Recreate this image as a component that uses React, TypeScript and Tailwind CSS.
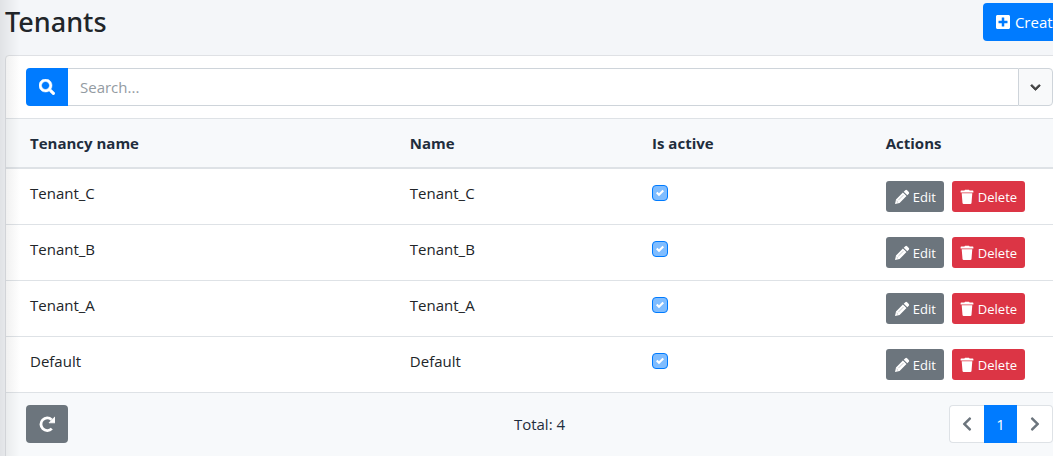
import React from "react";
import {
  FaChevronDown,
  FaChevronLeft,
  FaChevronRight,
  FaPlusSquare,
  FaSearch,
} from "react-icons/fa";

type Tenant = { name: string; active: boolean };

const tenants: Tenant[] = [
  { name: "Tenant_C", active: true },
  { name: "Tenant_B", active: true },
  { name: "Tenant_A", active: true },
  { name: "Default", active: true },
];

function RedoIcon() {
  return (
    <svg viewBox="0 0 16 16" className="size-4" aria-hidden="true">
      <path d="M12.8 12.6A6.3 6.3 0 1 1 12.6 3.7" fill="none" stroke="#fff" strokeWidth="2.8" />
      <path d="M16 0.8V6.8H10z" fill="#fff" stroke="#fff" strokeWidth="0.8" strokeLinejoin="round" />
    </svg>
  );
}

function PencilIcon() {
  return (
    <svg viewBox="0 0 16 16" className="size-4" aria-hidden="true">
      <path
        fill="#fff"
        d="M1 15L2 10.4L8.9 3.5L12.5 7.1L5.6 14zM9.7 2.7L11.3 1.2Q12.2 0.4 13.1 1.2L14.8 2.9Q15.6 3.8 14.8 4.7L13.3 6.3z"
      />
      <path fill="none" stroke="#6c757d" strokeOpacity="0.6" strokeWidth="0.7" d="M4.3 11.2L9.4 6.1M2.6 12L4 13.4" />
    </svg>
  );
}

function TrashIcon() {
  return (
    <svg viewBox="0 0 14 16" className="h-4 w-3.5" aria-hidden="true">
      <path
        fill="#fff"
        d="M0.6 2.2Q0.6 1.6 1.2 1.6H4.4L5 0.8H9L9.6 1.6H12.8Q13.4 1.6 13.4 2.2V3.5H0.6zM1.7 4.2H12.3L11.5 13.9Q11.4 15 10.3 15H3.7Q2.6 15 2.5 13.9z"
      />
    </svg>
  );
}

function ActiveBox({ tenant }: { tenant: Tenant }) {
  return (
    <label className="relative block size-4">
      <input
        type="checkbox"
        checked={tenant.active}
        disabled
        readOnly
        aria-label={`${tenant.name} is active`}
        className="block size-4 appearance-none rounded border border-[#007bff] bg-[#80bdff]"
      />
      <svg viewBox="0 0 8 8" className="pointer-events-none absolute top-1 left-1 size-2" aria-hidden="true">
        <path fill="#fff" d="M6.564.75l-3.59 3.612-1.538-1.55L0 4.26 2.974 7.25 8 2.193z" />
      </svg>
    </label>
  );
}

function TenantRow({ tenant }: { tenant: Tenant }) {
  return (
    <tr className="h-14 border-b border-[#dee2e6] align-top">
      <td className="px-6 py-3">{tenant.name}</td>
      <td className="px-6 py-3">{tenant.name}</td>
      <td className="px-6 py-4">
        <ActiveBox tenant={tenant} />
      </td>
      <td className="px-6 py-3">
        <div className="flex gap-2 text-[13px]">
          <button type="button" className="flex h-[31px] items-center gap-[3px] rounded-[3px] bg-[#6c757d] px-2 text-white">
            <PencilIcon />
            Edit
          </button>
          <button type="button" className="flex h-[31px] items-center gap-1 rounded-[3px] bg-[#dc3545] px-2 text-white">
            <TrashIcon />
            Delete
          </button>
        </div>
      </td>
    </tr>
  );
}

export default function App() {
  return (
    <main className="relative min-h-screen overflow-hidden bg-[#f4f6f9] pl-[5px] font-['Open_Sans','Noto_Sans',sans-serif] text-[15px] leading-6 text-[#212529]">
      <div className="-mr-[21px]">
        <header className="flex h-[55px] items-start justify-between">
          <h1 className="pt-1 font-['Noto_Sans','Open_Sans',sans-serif] text-[27px] leading-9 font-medium">Tenants</h1>
          <button
            type="button"
            className="mt-[3px] mr-px flex h-[38px] items-center gap-1 rounded bg-[#007bff] px-3 whitespace-nowrap text-white"
          >
            <FaPlusSquare className="size-4" />
            Create
          </button>
        </header>

        <section className="rounded border border-[#dfe1e5] bg-white">
          <form className="flex border-b border-[#dee2e6] px-5 py-3" onSubmit={(e) => e.preventDefault()}>
            <button
              type="submit"
              aria-label="Search"
              className="flex h-[38px] w-[42px] items-center justify-center rounded-l bg-[#007bff] text-white"
            >
              <FaSearch className="size-4 stroke-current stroke-[16]" />
            </button>
            <input
              type="text"
              aria-label="Search tenants"
              placeholder="Search..."
              className="h-[38px] min-w-0 flex-1 border-y border-[#ced4da] bg-white px-3 placeholder:text-[#939ba2]"
            />
            <button
              type="button"
              aria-label="Advanced filters"
              className="flex h-[38px] w-[35px] items-center justify-center rounded-r border border-[#ced4da] bg-[#f8f9fa] text-[#444]"
            >
              <FaChevronDown className="size-[11px] stroke-current stroke-[40]" />
            </button>
          </form>

          <table className="w-full table-fixed border-collapse text-left">
            <colgroup>
              <col className="w-[35.6%]" />
              <col className="w-[22.7%]" />
              <col className="w-[21.9%]" />
              <col />
            </colgroup>
            <thead>
              <tr className="h-[49px] border-b-2 border-[#dee2e6] bg-[#f7f9fb] text-[#1f2d3d]">
                <th className="px-6 font-bold">Tenancy name</th>
                <th className="px-6 font-bold">Name</th>
                <th className="px-6 font-bold">Is active</th>
                <th className="px-6 font-bold">Actions</th>
              </tr>
            </thead>
            <tbody>
              {tenants.map((tenant) => (
                <TenantRow key={tenant.name} tenant={tenant} />
              ))}
            </tbody>
          </table>

          <footer className="grid grid-cols-3 items-center bg-[#f7f9fb] px-5 pt-3 pb-4 text-[#1f2d3d]">
            <button
              type="button"
              aria-label="Refresh"
              className="flex h-[38px] w-[42px] items-center justify-center rounded bg-[#6c757d] text-white"
            >
              <RedoIcon />
            </button>
            <p className="text-center">Total: 4</p>
            <nav aria-label="Pages" className="flex h-[38px] justify-end">
              <button
                type="button"
                aria-label="Previous page"
                className="flex w-[35px] items-center justify-center rounded-l border border-r-0 border-[#dee2e6] bg-white text-[#6c757d]"
              >
                <FaChevronLeft className="size-4" />
              </button>
              <button type="button" aria-current="page" className="w-[33px] bg-[#007bff] text-white">
                1
              </button>
              <button
                type="button"
                aria-label="Next page"
                className="flex w-9 items-center justify-center rounded-r border border-l-0 border-[#dee2e6] bg-white text-[#6c757d]"
              >
                <FaChevronRight className="size-4" />
              </button>
            </nav>
          </footer>
        </section>
      </div>
      <div className="pointer-events-none absolute top-0 bottom-0 left-0 w-5 bg-linear-to-r from-black/8 to-transparent" />
    </main>
  );
}
